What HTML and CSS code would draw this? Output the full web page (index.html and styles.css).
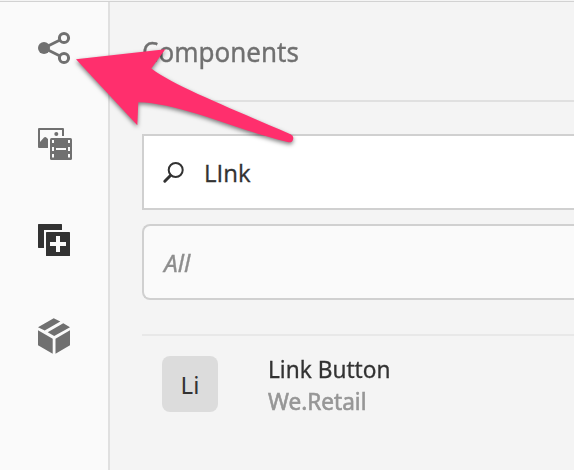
FILE: index.html
```html
<!DOCTYPE html>
<html lang="en">
<head>
<meta charset="utf-8">
<title>Components</title>
<link rel="stylesheet" href="styles.css">
</head>
<body>
<div class="app">
  <nav class="rail">
    <div class="rail-item">
      <svg class="icon" viewBox="0 0 40 40">
        <path d="M26 12 10 20l16 8" fill="none" stroke="currentColor" stroke-width="2.8"/>
        <circle cx="10" cy="20" r="6"/>
        <circle class="ring" cx="30" cy="10" r="4.6"/>
        <circle class="ring" cx="30" cy="30" r="4.6"/>
      </svg>
    </div>
    <div class="rail-item">
      <svg class="icon" viewBox="0 0 40 40">
        <path fill-rule="evenodd" d="M5 4h24q1 0 1 1v7h-2V6H6v12l4-4.400q1-.9 2-.3l2 1.700V24H5q-1 0-1-1V5q0-1 1-1z"/>
        <circle cx="22.300" cy="10" r="2"/>
        <rect x="16" y="14" width="22" height="22" rx="1.500"/>
        <path class="cut" d="M18 16h2v3h-2zM18 23h2v4h-2zM18 30h2v3.500h-2zM34 16h2v3h-2zM34 23h2v4h-2zM34 30h2v3.500h-2zM22 24h10v2H22z"/>
      </svg>
    </div>
    <div class="rail-item rail-item-active">
      <svg class="icon" viewBox="0 0 40 40">
        <path d="M4.500 4h23l.5.5V10H10v18H4.500l-.5-.5v-23z"/>
        <rect x="12" y="12" width="24" height="24" rx=".6"/>
        <path class="cut" d="M22 16h4v6h6v4h-6v6h-4v-6h-6v-4h6z"/>
      </svg>
    </div>
    <div class="rail-item">
      <svg class="icon" viewBox="0 0 40 40">
        <path d="M4 11.300 19.700 2.200 26.300 5.500 10.700 14.600zM13.700 16.200 29.300 7.200 36 11.200 20.200 19.900zM4 14.300l14.700 8.400v15L4 29.300zM21.500 22.700 36 14.300v15l-14.500 8.400z"/>
      </svg>
    </div>
  </nav>
  <main class="panel">
    <header class="panel-header"><h1 class="title">Components</h1></header>
    <div class="search">
      <svg class="search-icon" viewBox="0 0 24 24">
        <circle cx="13.700" cy="10" r="7"/>
        <path d="M8.500 15.500 2.800 21.200"/>
      </svg>
      <span class="query">LInk</span>
    </div>
    <div class="select"><span class="select-value">All</span></div>
    <div class="result">
      <div class="thumb"><span class="thumb-text">Li</span></div>
      <div class="labels">
        <div class="name">Link Button</div>
        <div class="group">We.Retail</div>
      </div>
    </div>
  </main>
</div>
<svg class="pointer" viewBox="0 0 574 470">
  <path d="M76 59.300 165.300 49.300 151.300 68.500C176 87 238 111 290.500 134.200A4.200 4.200 0 0 1 288.500 142.300C240 131 180 103 138.300 102.300L137.300 125.300z"/>
</svg>
</body>
</html>
```

FILE: styles.css
```css
* { box-sizing: border-box; }
body {
  margin: 0;
  width: 574px;
  height: 470px;
  overflow: hidden;
  background: #f4f4f4;
  font-family: "Open Sans", "Noto Sans", sans-serif;
  color: #323232;
}
.app {
  display: flex;
  height: 470px;
  padding-top: 2px;
  background: linear-gradient(#f4f4f4 1px, #d2d2d2 1px, #d2d2d2 2px, #f4f4f4 2px);
}
.rail {
  width: 110px;
  flex: none;
  background: #fafafa;
  border-right: 2px solid #e0e0e0;
}
.rail-item {
  height: 96px;
  display: flex;
  align-items: center;
  justify-content: center;
  color: #707070;
}
.rail-item:first-child { height: 94px; padding-bottom: 2px; }
.rail-item-active { color: #323232; }
.icon { width: 40px; height: 40px; fill: currentColor; }
.ring { fill: #fafafa; stroke: currentColor; stroke-width: 3; }
.cut { fill: #fafafa; }
.panel {
  flex: 1;
  min-width: 0;
  padding-left: 32px;
}
.panel-header {
  height: 100px;
  padding-top: 2px;
  border-bottom: 2px solid #e0e0e0;
  display: flex;
  align-items: center;
}
.title {
  margin: 0;
  font-family: "Noto Sans", sans-serif;
  font-size: 27px;
  font-weight: 400;
  line-height: 36px;
  color: #707070;
  -webkit-text-stroke: .35px;
}
.search, .select {
  display: flex;
  align-items: center;
  height: 76px;
  border: 2px solid #d0d0d0;
  border-right: 0;
  padding-left: 18px;
  font-size: 24px;
}
.search { margin-top: 32px; background: #fff; }
.search-icon {
  width: 24px;
  height: 24px;
  margin-right: 18px;
  fill: none;
  stroke: #323232;
  stroke-width: 2;
}
.search-icon path { stroke-width: 3; stroke-linecap: round; }
.select {
  margin-top: 14px;
  padding-left: 20px;
  background: #fafafa;
  border-radius: 8px 0 0 8px;
  color: #8e8e8e;
  font-family: "Noto Sans", sans-serif;
  font-style: italic;
}
.result {
  display: flex;
  margin-top: 34px;
  padding: 20px 0 0 20px;
  border-top: 2px solid #e8e8e8;
  font-family: "Noto Sans", sans-serif;
  font-size: 24px;
}
.thumb {
  display: flex;
  align-items: center;
  justify-content: center;
  width: 56px;
  height: 56px;
  border-radius: 8px;
  background: #dcdcdc;
}
.labels { margin-left: 50px; margin-top: -3px; line-height: 32px; }
.group { color: #969696; }
.title, .query, .select-value, .name, .group { transform-origin: 0 50%; }
.title { transform: scaleX(.963); }
.query { transform: scaleX(1); }
.select-value { transform: scaleX(1.02); }
.name { transform: scaleX(.944); }
.group { transform: scaleX(.94); }
.query, .select-value, .name, .group { -webkit-text-stroke: .3px; }
.group { -webkit-text-stroke: .6px; }
.pointer {
  position: absolute;
  inset: 0;
  width: 574px;
  height: 470px;
  fill: #ff2f6d;
  filter: drop-shadow(0 2px 2px rgba(0, 0, 0, .5));
}
```
